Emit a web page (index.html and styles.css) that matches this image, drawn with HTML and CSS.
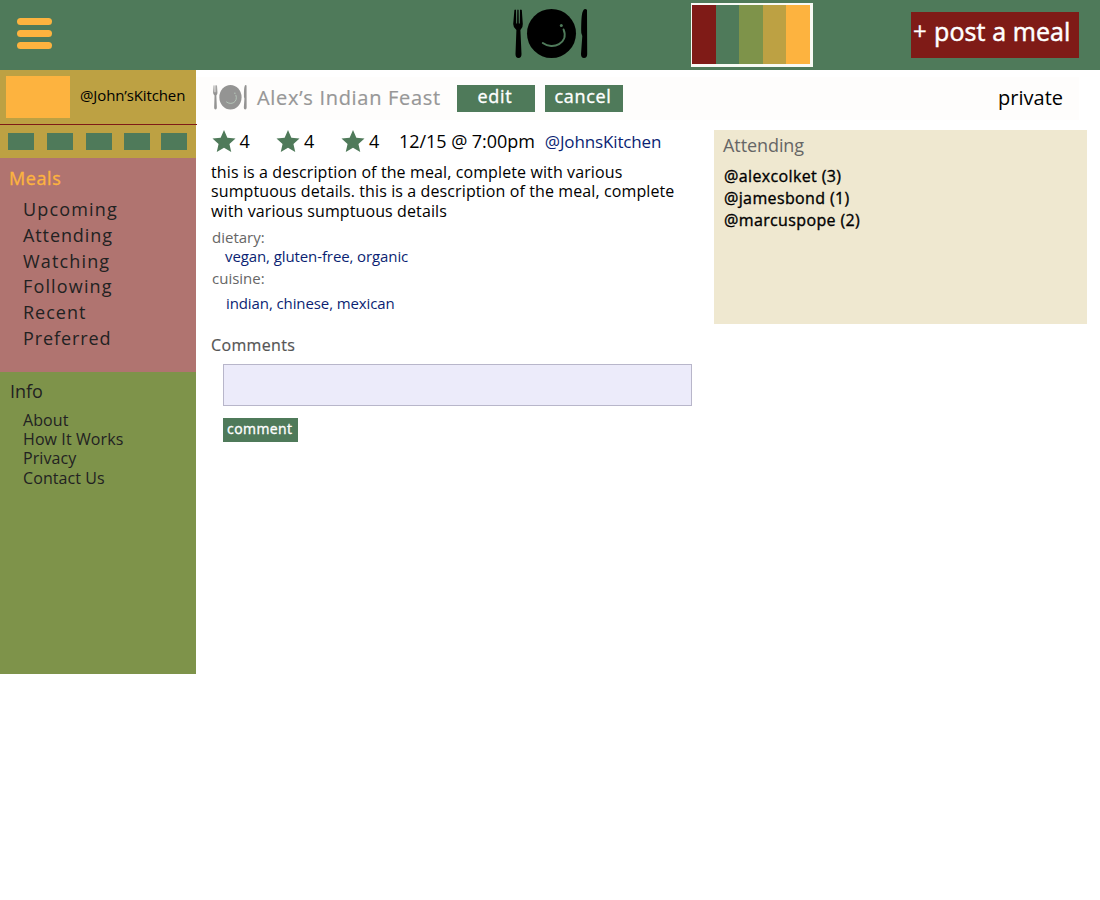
FILE: index.html
```html
<!DOCTYPE html>
<html lang="en">
<head>
<meta charset="utf-8">
<title>Alex’s Indian Feast</title>
<link rel="stylesheet" href="styles.css">
</head>
<body>
<svg class="defs" aria-hidden="true">
  <symbol id="plate" viewBox="0 0 75 50" preserveAspectRatio="none">
    <path d="M1.400 1 Q2.200 0 3 1 L3.200 14.500 H4.100 L4.300 1 Q4.900 0 5.600 1 L5.800 14.500 H6.800 L7 1 Q7.800 0 8.800 1 L9.800 15 Q10.200 18 7.400 21 L8.500 45 Q8.500 49 5.500 49 Q2.500 49 2.500 45 L3.400 21 Q0 18 .2 15 Z"/>
    <circle cx="38.500" cy="24.500" r="24.500"/>
    <path class="smile" d="M29.800 34 C40 41.500 56 34 50.600 20.500"/>
    <circle class="dimple" cx="48.300" cy="16.500" r="1.500"/>
    <path d="M74 1 Q73.500 0 72 0 C69 1 68.300 6 68.300 24 L69.300 27 L68 45 Q68 49 71 49 Q74.200 49 74.200 45 Z"/>
  </symbol>
  <symbol id="star" viewBox="0 0 22 21">
    <path d="M11 0 L14.200 7.300 L22 8 L16.200 13.300 L17.900 21 L11 17 L4.100 21 L5.800 13.300 L0 8 L7.800 7.300 Z"/>
  </symbol>
</svg>

<header class="topbar">
  <button class="menu" aria-label="Menu"><i></i><i></i><i></i></button>
  <svg class="logo"><use href="#plate"/></svg>
  <div class="palette"><i class="maroon"></i><i class="green"></i><i class="olive"></i><i class="gold"></i><i class="orange"></i></div>
  <button class="post"><span class="plus">+</span><span class="post-label">post a meal</span></button>
</header>

<div class="page">
  <aside class="sidebar">
    <div class="account"><div class="avatar"></div><span class="handle">@John’sKitchen</span></div>
    <div class="shortcuts"><i></i><i></i><i></i><i></i><i></i></div>
    <nav class="meals">
      <h2>Meals</h2>
      <ul><li>Upcoming</li><li>Attending</li><li>Watching</li><li>Following</li><li>Recent</li><li>Preferred</li></ul>
    </nav>
    <nav class="info">
      <h2>Info</h2>
      <ul><li>About</li><li>How It Works</li><li>Privacy</li><li>Contact Us</li></ul>
    </nav>
  </aside>

  <main class="content">
    <div class="titlebar">
      <svg class="title-icon"><use href="#plate"/></svg>
      <h1>Alex’s Indian Feast</h1>
      <button class="action edit">edit</button>
      <button class="action">cancel</button>
      <span class="private">private</span>
    </div>
    <div class="columns">
      <section class="details">
        <div class="stats">
          <span class="rating"><svg><use href="#star"/></svg>4</span>
          <span class="rating"><svg><use href="#star"/></svg>4</span>
          <span class="rating"><svg><use href="#star"/></svg>4</span>
          <span class="date">12/15 @ 7:00pm</span>
          <a class="host">@JohnsKitchen</a>
        </div>
        <p class="description">this is a description of the meal, complete with various<br>sumptuous details. this is a description of the meal, complete<br>with various sumptuous details</p>
        <dl class="tags">
          <dt>dietary:</dt>
          <dd>vegan, gluten-free, organic</dd>
          <dt class="cuisine">cuisine:</dt>
          <dd class="cuisines">indian, chinese, mexican</dd>
        </dl>
        <h3>Comments</h3>
        <textarea class="entry" aria-label="Comment"></textarea>
        <button class="submit">comment</button>
      </section>
      <section class="attending">
        <h3>Attending</h3>
        <ul><li>@alexcolket (3)</li><li>@jamesbond (1)</li><li>@marcuspope (2)</li></ul>
      </section>
    </div>
  </main>
</div>
</body>
</html>
```
FILE: styles.css
```css
* { box-sizing: border-box; margin: 0; padding: 0; }
body { width: 1100px; background: #fff; color: #000; font-family: "Open Sans", "Noto Sans", sans-serif; }
button { border: 0; font-family: inherit; color: #fff; white-space: nowrap; }
ul { list-style: none; }
h1, h2, h3 { font-weight: 400; }
.defs { display: none; }

.topbar { height: 70px; background: #4f7a5a; display: flex; align-items: flex-start; }
.menu { background: none; width: 35px; margin: 18px 0 0 17px; display: flex; flex-direction: column; gap: 5px; }
.menu i { height: 7px; border-radius: 4px; background: #fdb33f; }
.logo { width: 75px; height: 50px; margin: 9px 0 0 461px; }
.smile { fill: none; stroke: #4f7a5a; stroke-width: 2; stroke-linecap: round; }
.dimple { fill: #4f7a5a; }
.title-icon { --mark: #fff; }
.palette { width: 122px; height: 64px; margin: 3px 0 0 103px; padding: 2px 3px 3px 1px; background: #f8faf5; display: flex; }
.palette i { flex: 1; }
.maroon { background: #7f1b17; }
.green { background: #4f7a5a; }
.olive { background: #7e934a; }
.gold { background: #bda143; }
.orange { background: #fdb33f; }
.post { width: 168px; height: 46px; margin: 12px 0 0 98px; padding: 0 0 8px 2px; background: #7f1b17; display: flex; align-items: center; font-size: 25px; line-height: 38px; -webkit-text-stroke: .3px #fff; }
.plus { font-size: 24px; width: 21px; text-align: left; }
.post-label { letter-spacing: .1px; -webkit-text-stroke: .5px #fff; }

.page { display: flex; align-items: flex-start; }
.sidebar { width: 196px; }
.account { width: 197px; height: 55px; padding: 6px 0 0 6px; display: flex; background: linear-gradient(#bda143, #bda143) no-repeat 0 0 / 196px 100%; border-bottom: 1px solid #7f1b17; }
.avatar { width: 64px; height: 42px; background: #fdb33f; }
.handle { margin-left: 10px; font-size: 15px; line-height: 38px; letter-spacing: -.12px; }
.shortcuts { height: 33px; padding: 8px 9px 0 8px; background: #bda143; display: flex; gap: 13px; }
.shortcuts i { width: 26px; height: 17px; background: #4f7a5a; }
.shortcuts i:nth-child(n+4) { margin-left: -1px; }
.shortcuts i:last-child { margin-left: -2px; }
.meals { height: 214px; padding: 7px 0 0 9px; background: #b07470; color: #222; }
.meals h2 { color: #fdb33f; font-size: 18px; line-height: 26px; letter-spacing: .6px; -webkit-text-stroke: .35px #fdb33f; }
.meals ul { margin: 6px 0 0 14px; font-size: 18px; line-height: 25.800px; letter-spacing: 1px; }
.meals li:first-child, .meals li:nth-child(3), .meals li:nth-child(4) { letter-spacing: 1.150px; }
.meals li:nth-child(2), .meals li:last-child { letter-spacing: .9px; }
.info { height: 302px; padding: 7px 0 0 10px; background: #7e934a; color: #222; }
.info h2 { font-size: 18px; line-height: 25px; }
.info ul { margin: 7px 0 0 13px; font-size: 16px; line-height: 19.200px; letter-spacing: .09px; }

.content { width: 904px; padding-top: 7px; }
.titlebar { width: 883px; height: 43px; padding: 8px 17px 0 17px; background: #fefdfc; display: flex; align-items: flex-start; }
.title-icon { width: 34px; height: 25px; opacity: .41; }
.titlebar h1 { width: 200px; margin-left: 10px; color: #979797; font-size: 20px; line-height: 26px; letter-spacing: .7px; -webkit-text-stroke: .2px #979797; }
.action { width: 78px; height: 27px; margin-right: 10px; background: #4f7a5a; font-size: 18px; line-height: 22px; padding: 0 2px 5px 0; letter-spacing: .7px; -webkit-text-stroke: .35px #fff; }
.private { margin-left: auto; margin-right: -1px; font-size: 20px; line-height: 25px; }

.columns { display: flex; align-items: flex-start; padding-top: 10px; }
.details { width: 503px; margin-right: 15px; padding-left: 15px; }
.stats { height: 24px; display: flex; font-size: 18px; line-height: 22px; }
.rating { width: 65px; display: flex; gap: 4px; }
.rating:nth-child(3) { width: 59px; }
.rating:first-child svg { margin-left: .500px; }
.rating svg { width: 24px; height: 22px; fill: #4f7a5a; }
.date { letter-spacing: -.05px; margin-left: -1px; }
.host { font-size: 17px; line-height: 24px; margin-left: 10px; letter-spacing: -.14px; color: #0b1f73; }
.description { margin-top: 9px; font-size: 16px; line-height: 19.400px; letter-spacing: .11px; white-space: nowrap; }
.tags { font-size: 15px; line-height: 19px; margin-top: 7px; padding-left: 1px; }
.tags dt { color: #666; }
.tags dd { margin-left: 13px; letter-spacing: -.1px; color: #0b1f73; }
.tags .cuisine { margin-top: 3px; }
.tags .cuisines { margin: 6px 0 0 14px; }
.details h3 { color: #555; font-size: 16px; line-height: 24px; letter-spacing: .35px; margin-top: 20px; -webkit-text-stroke: .2px #555; }
.entry { display: block; width: 469px; height: 42px; margin: 7px 0 12px 12px; border: 1px solid #b8b6ca; background: #ecebfa; resize: none; }
.submit { display: block; width: 74.500px; height: 24px; margin-left: 12px; background: #4f7a5a; font-size: 14px; line-height: 22px; padding: 0 1px 2px 0; letter-spacing: .4px; -webkit-text-stroke: .35px #fff; }
.attending { width: 373px; height: 194px; padding: 3px 0 0 9px; background: #efe8d0; }
.attending h3 { color: #666; font-size: 18px; line-height: 25px; letter-spacing: -.08px; }
.attending ul { margin: 7px 0 0 1px; font-size: 16px; line-height: 22px; letter-spacing: .37px; -webkit-text-stroke: .35px #000; }
```
